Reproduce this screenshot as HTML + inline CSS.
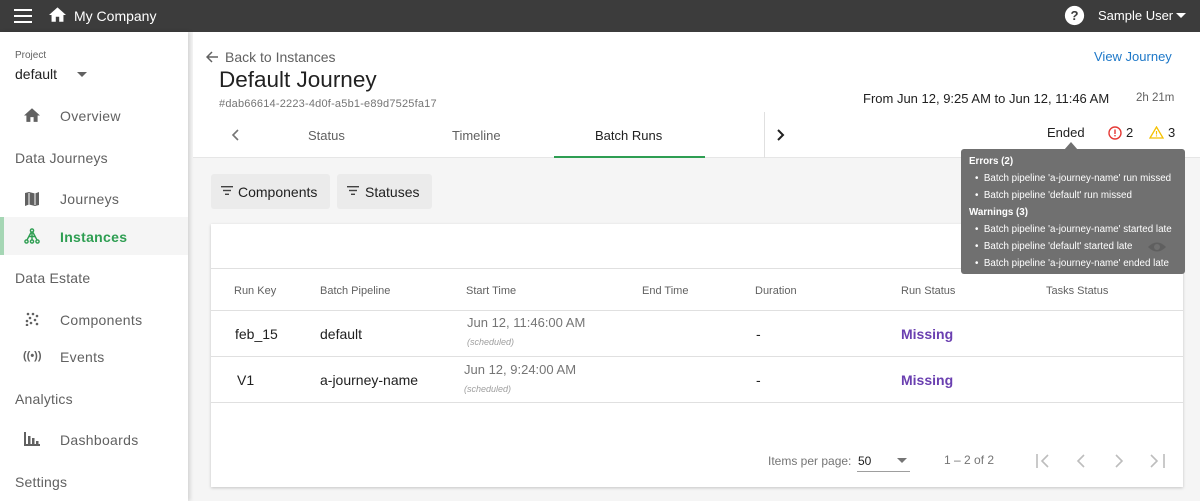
<!DOCTYPE html>
<html><head><meta charset="utf-8"><style>
*{box-sizing:border-box;margin:0;padding:0}
body{width:1200px;height:501px;overflow:hidden;font-family:"Liberation Sans",sans-serif;background:#f5f5f5;position:relative;color:#212121}
.a{position:absolute;white-space:nowrap}
.top{left:0;top:0;width:1200px;height:32px;background:#3c3c3c}
.side{left:0;top:32px;width:188px;height:469px;background:#fff;box-shadow:2px 0 4px rgba(0,0,0,.15)}
.nav{font-size:14px;color:#616161;letter-spacing:.3px}
.sec{font-size:14px;color:#616161;letter-spacing:.2px}
.hdr{left:193px;top:32px;width:1007px;height:126px;background:#fff;border-bottom:1px solid #e6e6e6}
.th{font-size:11px;color:#616161}
.td{font-size:14px;color:#212121}
.sm{font-size:9px;font-style:italic;color:#9e9e9e}
.miss{font-size:14px;color:#6a3fb0;font-weight:bold}
.tt{font-size:9.8px;color:#fff}
</style></head><body>
<div class="a top"></div>
<svg class="a" style="left:14px;top:9px" width="18" height="14"><rect y="0" width="18" height="2" fill="#fff"/><rect y="6" width="18" height="2" fill="#fff"/><rect y="12" width="18" height="2" fill="#fff"/></svg>
<svg class="a" style="left:49px;top:7px" width="17" height="16" viewBox="2 3 20 18"><path d="M10 20v-6h4v6h5v-8h3L12 3 2 12h3v8z" fill="#fff"/></svg>
<div class="a" style="left:74px;top:8px;font-size:14px;color:#fff">My Company</div>
<svg class="a" style="left:1064px;top:5px" width="21" height="21" viewBox="0 0 24 24"><circle cx="12" cy="12" r="11" fill="#fff"/><text x="12" y="17" font-size="15" font-weight="bold" text-anchor="middle" fill="#3c3c3c" font-family="Liberation Sans">?</text></svg>
<div class="a" style="left:1098px;top:8px;font-size:13px;color:#fff">Sample User</div>
<svg class="a" style="left:1176px;top:13px" width="10" height="6"><path d="M0 0h10L5 5z" fill="#fff"/></svg>

<div class="a side"></div>
<div class="a" style="left:15px;top:50px;font-size:10px;color:#616161">Project</div>
<div class="a" style="left:15px;top:66px;font-size:14px;color:#212121">default</div>
<svg class="a" style="left:77px;top:72px" width="10" height="5"><path d="M0 0h10L5 5z" fill="#616161"/></svg>
<svg class="a" style="left:24px;top:108px" width="16" height="15" viewBox="2 3 20 18"><path d="M10 20v-6h4v6h5v-8h3L12 3 2 12h3v8z" fill="#616161"/></svg>
<div class="a nav" style="left:60px;top:108px">Overview</div>
<div class="a sec" style="left:15px;top:150px">Data Journeys</div>
<svg class="a" style="left:25px;top:192px" width="14" height="14" viewBox="0 0 14 14"><path d="M0 1l4-1 6 1.5L14 0v13l-4 1-6-1.5L0 14z" fill="#616161"/><path d="M4 1v11.5M10 1.5V13" stroke="#fff" stroke-width="1"/></svg>
<div class="a nav" style="left:60px;top:191px">Journeys</div>
<div class="a" style="left:0;top:217px;width:188px;height:38px;background:#f5f5f5"></div>
<div class="a" style="left:0;top:217px;width:4px;height:38px;background:#a5d6b4"></div>
<svg class="a" style="left:24px;top:228px" width="16" height="16" viewBox="0 0 16 16" fill="none" stroke="#2e9e52" stroke-width="1.4"><circle cx="8" cy="2.5" r="1.6"/><circle cx="2.5" cy="13.5" r="1.6"/><circle cx="8" cy="13.5" r="1.6"/><circle cx="13.5" cy="13.5" r="1.6"/><path d="M8 4v8M7 4.5L3 12M9 4.5l4 7.5M5 8.5h6"/></svg>
<div class="a" style="left:60px;top:229px;font-size:14px;color:#2e9e52;font-weight:bold;letter-spacing:.3px">Instances</div>
<div class="a sec" style="left:15px;top:270px">Data Estate</div>
<svg class="a" style="left:25px;top:312px" width="14" height="14" fill="#616161"><circle cx="3" cy="2" r="1.3"/><circle cx="8" cy="2" r="1.3"/><circle cx="12" cy="4" r="1.3"/><circle cx="5" cy="6" r="1.3"/><circle cx="10" cy="8" r="1.3"/><circle cx="2" cy="9" r="1.3"/><circle cx="6" cy="11" r="1.3"/><circle cx="12" cy="12" r="1.3"/><circle cx="2" cy="13" r="1.3"/></svg>
<div class="a nav" style="left:60px;top:312px">Components</div>
<div class="a" style="left:23px;top:350px;font-size:11px;color:#616161;font-weight:bold">((•))</div>
<div class="a nav" style="left:60px;top:349px">Events</div>
<div class="a sec" style="left:15px;top:391px">Analytics</div>
<svg class="a" style="left:24px;top:432px" width="16" height="14" fill="#616161"><rect x="0" y="0" width="2" height="14"/><rect x="0" y="12" width="16" height="2"/><rect x="4" y="4" width="2.5" height="9"/><rect x="8" y="6" width="2.5" height="7"/><rect x="12" y="9" width="2.5" height="4"/></svg>
<div class="a nav" style="left:60px;top:432px">Dashboards</div>
<div class="a sec" style="left:15px;top:474px">Settings</div>

<div class="a hdr"></div>
<svg class="a" style="left:206px;top:51px" width="13" height="12" viewBox="0 0 13 12"><path d="M12 6H2M6 1L1 6l5 5" stroke="#616161" stroke-width="1.5" fill="none"/></svg>
<div class="a" style="left:225px;top:49px;font-size:14px;color:#616161">Back to Instances</div>
<div class="a" style="left:219px;top:67px;font-size:22.5px;color:#212121">Default Journey</div>
<div class="a" style="left:219px;top:98px;font-size:11px;color:#757575;letter-spacing:.2px">#dab66614-2223-4d0f-a5b1-e89d7525fa17</div>
<div class="a" style="left:1094px;top:49px;font-size:13px;color:#1e78c8">View Journey</div>
<div class="a" style="left:863px;top:91px;font-size:13px;color:#212121">From Jun 12, 9:25 AM to Jun 12, 11:46 AM</div>
<div class="a" style="left:1136px;top:92px;font-size:11.5px;color:#616161">2h 21m</div>
<svg class="a" style="left:231px;top:129px" width="8" height="12"><path d="M7 1L2 6l5 5" stroke="#757575" stroke-width="1.6" fill="none"/></svg>
<div class="a" style="left:308px;top:128px;font-size:13px;color:#616161">Status</div>
<div class="a" style="left:452px;top:128px;font-size:13px;color:#616161">Timeline</div>
<div class="a" style="left:595px;top:128px;font-size:13px;color:#212121">Batch Runs</div>
<div class="a" style="left:554px;top:156px;width:151px;height:2px;background:#2e9e52"></div>
<div class="a" style="left:764px;top:112px;width:1px;height:46px;background:#e0e0e0"></div>
<svg class="a" style="left:777px;top:129px" width="8" height="12"><path d="M1 1l5 5-5 5" stroke="#212121" stroke-width="2" fill="none"/></svg>
<div class="a" style="left:1047px;top:125px;font-size:13px;color:#212121">Ended</div>
<svg class="a" style="left:1108px;top:126px" width="14" height="14" viewBox="0 0 14 14"><circle cx="7" cy="7" r="6" stroke="#e53935" stroke-width="1.4" fill="none"/><rect x="6.3" y="3.5" width="1.4" height="4.5" fill="#e53935"/><rect x="6.3" y="9" width="1.4" height="1.4" fill="#e53935"/></svg>
<div class="a" style="left:1126px;top:125px;font-size:13px;color:#212121">2</div>
<svg class="a" style="left:1149px;top:126px" width="15" height="13" viewBox="0 0 15 13"><path d="M7.5 1L14 12H1z" stroke="#f5c100" stroke-width="1.3" fill="none"/><rect x="6.9" y="5" width="1.2" height="3.5" fill="#f5c100"/><rect x="6.9" y="9.3" width="1.2" height="1.2" fill="#f5c100"/></svg>
<div class="a" style="left:1168px;top:125px;font-size:13px;color:#212121">3</div>

<div class="a" style="left:211px;top:174px;width:119px;height:35px;background:#ebebeb;border-radius:3px"></div>
<div class="a" style="left:337px;top:174px;width:95px;height:35px;background:#ebebeb;border-radius:3px"></div>
<svg class="a" style="left:221px;top:186px" width="12" height="9" fill="#424242"><rect width="12" height="1.4"/><rect x="2" y="3.8" width="8" height="1.4"/><rect x="4" y="7.6" width="4" height="1.4"/></svg>
<div class="a" style="left:238px;top:184px;font-size:14px;color:#212121">Components</div>
<svg class="a" style="left:347px;top:186px" width="12" height="9" fill="#424242"><rect width="12" height="1.4"/><rect x="2" y="3.8" width="8" height="1.4"/><rect x="4" y="7.6" width="4" height="1.4"/></svg>
<div class="a" style="left:365px;top:184px;font-size:14px;color:#212121">Statuses</div>

<div class="a" style="left:211px;top:224px;width:972px;height:263px;background:#fff;box-shadow:0 1px 3px rgba(0,0,0,.2)"></div>
<div class="a" style="left:211px;top:268px;width:972px;height:1px;background:#e0e0e0"></div>
<div class="a th" style="left:234px;top:285px">Run Key</div>
<div class="a th" style="left:320px;top:285px">Batch Pipeline</div>
<div class="a th" style="left:466px;top:285px">Start Time</div>
<div class="a th" style="left:642px;top:285px">End Time</div>
<div class="a th" style="left:755px;top:285px">Duration</div>
<div class="a th" style="left:901px;top:285px">Run Status</div>
<div class="a th" style="left:1046px;top:285px">Tasks Status</div>
<div class="a" style="left:211px;top:310px;width:972px;height:1px;background:#e0e0e0"></div>
<div class="a td" style="left:235px;top:326px">feb_15</div>
<div class="a td" style="left:320px;top:326px">default</div>
<div class="a" style="left:467px;top:315px;font-size:13px;color:#757575">Jun 12, 11:46:00 AM</div>
<div class="a sm" style="left:467px;top:337px">(scheduled)</div>
<div class="a td" style="left:756px;top:326px">-</div>
<div class="a miss" style="left:901px;top:326px">Missing</div>
<div class="a" style="left:211px;top:356px;width:972px;height:1px;background:#e0e0e0"></div>
<div class="a td" style="left:237px;top:372px">V1</div>
<div class="a td" style="left:320px;top:372px">a-journey-name</div>
<div class="a" style="left:464px;top:362px;font-size:13px;color:#757575">Jun 12, 9:24:00 AM</div>
<div class="a sm" style="left:464px;top:384px">(scheduled)</div>
<div class="a td" style="left:756px;top:372px">-</div>
<div class="a miss" style="left:901px;top:372px">Missing</div>
<div class="a" style="left:211px;top:402px;width:972px;height:1px;background:#e0e0e0"></div>
<div class="a" style="left:768px;top:454px;font-size:12px;color:#757575">Items per page:</div>
<div class="a" style="left:858px;top:454px;font-size:12px;color:#212121">50</div>
<svg class="a" style="left:897px;top:458px" width="10" height="5"><path d="M0 0h10L5 5z" fill="#757575"/></svg>
<div class="a" style="left:857px;top:471px;width:53px;height:1px;background:#9e9e9e"></div>
<div class="a" style="left:944px;top:453px;font-size:12px;color:#757575">1 – 2 of 2</div>
<svg class="a" style="left:1035px;top:453px" width="132" height="16" fill="none" stroke="#bdbdbd" stroke-width="1.6"><path d="M2 1v14M13 2L7 8l6 6"/><path d="M49 2l-6 6 6 6"/><path d="M81 2l6 6-6 6"/><path d="M116 2l6 6-6 6M129 1v14"/></svg>

<div class="a" style="left:961px;top:149px;width:224px;height:125px;background:#707070;border-radius:3px"></div>
<svg class="a" style="left:1064px;top:142px" width="14" height="8"><path d="M0 8L7 0l7 8z" fill="#707070"/></svg>
<div class="a tt" style="left:969px;top:156px;font-weight:bold">Errors (2)</div>
<div class="a tt" style="left:975px;top:173px">•&nbsp; Batch pipeline 'a-journey-name' run missed</div>
<div class="a tt" style="left:975px;top:190px">•&nbsp; Batch pipeline 'default' run missed</div>
<div class="a tt" style="left:969px;top:207px;font-weight:bold">Warnings (3)</div>
<div class="a tt" style="left:975px;top:224px">•&nbsp; Batch pipeline 'a-journey-name' started late</div>
<div class="a tt" style="left:975px;top:241px">•&nbsp; Batch pipeline 'default' started late</div>
<div class="a tt" style="left:975px;top:258px">•&nbsp; Batch pipeline 'a-journey-name' ended late</div>
<svg class="a" style="left:1147px;top:241px" width="20" height="12" viewBox="0 0 20 12"><path d="M1 6Q10-3 19 6Q10 15 1 6z" fill="#5f5f5f"/><circle cx="10" cy="6" r="3" fill="#707070"/></svg>
</body></html>
